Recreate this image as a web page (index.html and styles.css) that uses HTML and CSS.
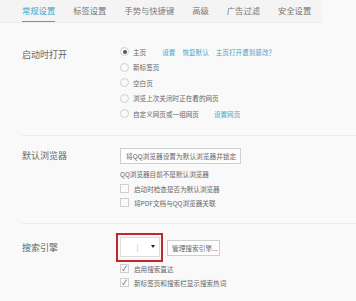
FILE: index.html
```html
<!DOCTYPE html>
<html>
<head>
<meta charset="utf-8">
<link rel="stylesheet" href="styles.css">
</head>
<body>
<div class="tabs">
  <span class="tab active">常规设置</span>
  <span class="tab">标签设置</span>
  <span class="tab">手势与快捷键</span>
  <span class="tab">高级</span>
  <span class="tab">广告过滤</span>
  <span class="tab">安全设置</span>
</div>

<section class="section s1">
  <div class="label">启动时打开</div>
  <div class="controls">
    <div class="row"><span class="radio on"></span><span>主页</span><a class="link l1">设置</a><a class="link">恢复默认</a><a class="link">主页打开遭到篡改？</a></div>
    <div class="row"><span class="radio"></span><span>新标签页</span></div>
    <div class="row"><span class="radio"></span><span>空白页</span></div>
    <div class="row"><span class="radio"></span><span>浏览上次关闭时正在看的网页</span></div>
    <div class="row"><span class="radio"></span><span>自定义网页或一组网页</span><a class="link l5">设置网页</a></div>
  </div>
</section>

<section class="section s2">
  <div class="label">默认浏览器</div>
  <div class="controls">
    <div class="btn wide">将QQ浏览器设置为默认浏览器并锁定</div>
    <div class="note">QQ浏览器目前不是默认浏览器</div>
    <div class="row"><span class="check"></span><span>启动时检查是否为默认浏览器</span></div>
    <div class="row"><span class="check"></span><span>将PDF文档与QQ浏览器关联</span></div>
  </div>
</section>

<section class="section s3">
  <div class="label">搜索引擎</div>
  <div class="controls">
    <div class="engine">
      <div class="mark">
        <div class="select"><span class="bar">|</span><span class="caret"></span></div>
      </div>
      <div class="btn manage">管理搜索引擎...</div>
    </div>
    <div class="row"><span class="check on">✓</span><span>启用搜索直达</span></div>
    <div class="row"><span class="check on">✓</span><span>新标签页和搜索栏显示搜索热词</span></div>
  </div>
</section>
</body>
</html>
```

FILE: styles.css
```css
* { box-sizing: border-box; }
body {
  margin: 0;
  background: #f9f9f9;
  font-family: "Noto Sans CJK SC", "Noto Sans", sans-serif;
  color: #666;
  width: 356px;
  height: 301px;
  overflow: hidden;
}
.tabs {
  display: flex;
  width: 322px;
  height: 23px;
  padding-left: 22px;
  gap: 18px;
  background: #f4f4f4;
  border-bottom: 1px solid #ececec;
}
.tab {
  font-size: 8.3px;
  line-height: 21px;
  color: #777;
  white-space: nowrap;
}
.tab.active {
  color: #48a7c9;
  border-bottom: 1px solid #48a7c9;
}
.section {
  display: flex;
  margin-left: 22px;
  border-bottom: 1px solid #ececec;
}
.s1 { padding: 21px 0 13px; }
.s2 { padding: 12px 0 13px; }
.s3 { padding: 9px 0 0; border-bottom: none; }
.label {
  width: 98px;
  flex: none;
  font-size: 9px;
  color: #666;
  line-height: 16px;
}
.s1 .label { padding-top: 3px; }
.s3 .label { padding-top: 7px; }
.controls {
  display: flex;
  flex-direction: column;
}
.row {
  display: flex;
  align-items: center;
  height: 15.5px;
  font-size: 6.6px;
  white-space: nowrap;
  color: #666;
}
.s2 .row, .s3 .row { height: 14px; }
.radio {
  width: 9px;
  height: 9px;
  border: 1px solid #cfcfcf;
  border-radius: 50%;
  background: #fafafa;
  margin-right: 4px;
  display: flex;
  align-items: center;
  justify-content: center;
}
.radio.on::after {
  content: "";
  width: 4px;
  height: 4px;
  border-radius: 50%;
  background: #555;
}
.link { color: #49a3c6; margin-left: 7px; }
.link.l1 { margin-left: 16px; }
.link.l5 { margin-left: 15px; }
.btn {
  border: 1px solid #cfcfcf;
  background: #fdfdfd;
  font-size: 6.7px;
  color: #666;
  white-space: nowrap;
  display: flex;
  align-items: center;
}
.btn.wide {
  width: 121px;
  height: 16px;
  padding-left: 5px;
}
.note {
  font-size: 6.6px;
  line-height: 15px;
  margin-top: 3px;
  white-space: nowrap;
}
.check {
  width: 9px;
  height: 9px;
  border: 1px solid #cfcfcf;
  background: #fafafa;
  margin-right: 5px;
  font-size: 7px;
  line-height: 7px;
  text-align: center;
  color: #555;
}
.engine {
  display: flex;
  align-items: center;
  margin-left: -4px;
}
.mark {
  border: 2.5px solid #c1272d;
  padding: 2px 1.5px;
  width: 47px;
  height: 29px;
}
.select {
  height: 20px;
  border: 1px solid #dcdcdc;
  background: #fff;
  display: flex;
  align-items: center;
  justify-content: space-between;
  padding: 0 4px 0 16px;
}
.bar {
  font-size: 7px;
  color: #aaa;
}
.caret {
  width: 0;
  height: 0;
  border-left: 2.5px solid transparent;
  border-right: 2.5px solid transparent;
  border-top: 3px solid #222;
}
.btn.manage {
  margin-left: 4px;
  width: 53px;
  height: 16px;
  padding-left: 4px;
  margin-top: 2px;
}
```
